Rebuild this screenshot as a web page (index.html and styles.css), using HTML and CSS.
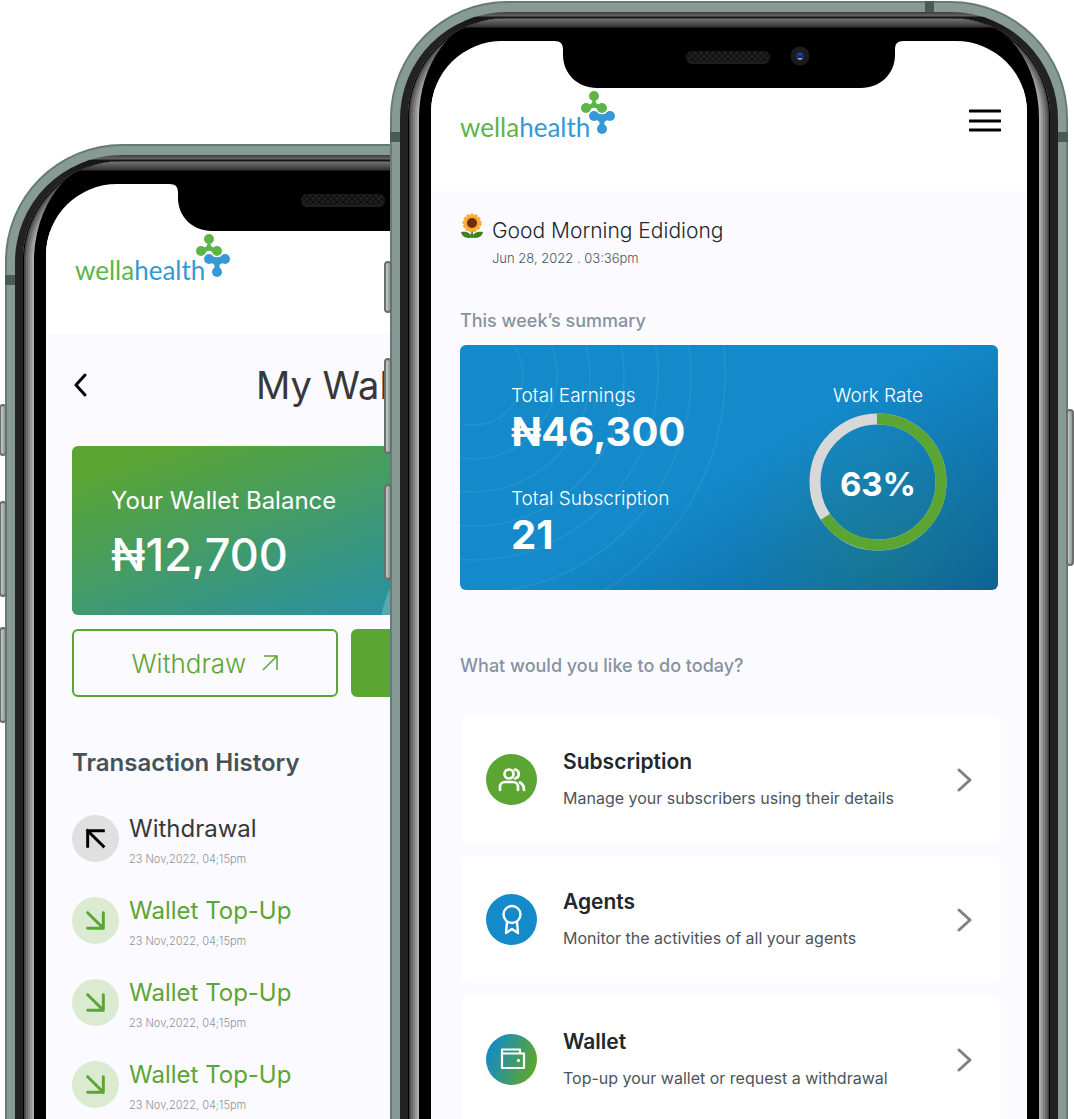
FILE: index.html
```html
<!DOCTYPE html>
<html lang="en">
<head>
<meta charset="utf-8">
<meta name="viewport" content="width=device-width, initial-scale=1">
<title>WellaHealth agent app</title>
<link rel="stylesheet" href="styles.css">
</head>
<body>
<svg class="defs" aria-hidden="true">
  <defs>
    <symbol id="mark" viewBox="0 0 36 44">
      <g fill="#5db548">
        <circle cx="14" cy="5" r="5"/><circle cx="6" cy="17" r="5"/><circle cx="22" cy="17" r="5"/>
        <path d="M12 8c1 3 0 5-4 6l2 5c2-3 6-3 8 0l2-5c-4-1-5-3-4-6z"/>
      </g>
      <g fill="#3698d4">
        <circle cx="14" cy="25" r="5"/><circle cx="30" cy="25" r="5"/><circle cx="22" cy="38" r="5"/>
        <path d="M16 21c2 3 10 3 12 0l0 8c-4 1-4 3-3 6h-6c1-3 1-5-3-6z"/>
      </g>
    </symbol>
    <symbol id="notch" viewBox="0 0 350 48">
      <path d="M0 0H350V0C343 0 341 3 341 9V14C341 33 326 47 307 47H43C24 47 9 33 9 14V9C9 3 7 0 0 0Z" fill="#000"/>
      <pattern id="mesh" width="6" height="6" patternUnits="userSpaceOnUse"><path d="M0 0l6 6M6 0L0 6" stroke="#0c0c0c"/></pattern>
      <rect x="132" y="10" width="84" height="13" rx="6" fill="#1f1f1f"/>
      <rect x="132" y="10" width="84" height="11" rx="5" fill="url(#mesh)"/>
      <circle cx="246" cy="15" r="9.500" fill="#1c1c1e"/>
      <circle cx="246" cy="15" r="4" fill="#1c2a7a"/>
      <path d="M243 17h6l-2 2h-2z" fill="#6f9fb8"/><circle cx="246" cy="14" r="1.500" fill="#5560a8"/><circle cx="246" cy="15" r="1" fill="#0a0a20"/>
    </symbol>
    <symbol id="top-up" viewBox="0 0 48 48">
      <path d="M16 16L32 32M32 16V32H16" fill="none" stroke="#5ba532" stroke-width="3" stroke-linecap="round" stroke-linejoin="round"/>
    </symbol>
    <symbol id="chevron" viewBox="0 0 16 24">
      <path d="M2 2l11 10L2 22" fill="none" stroke="#808080" stroke-width="3" stroke-linecap="round" stroke-linejoin="round"/>
    </symbol>
  </defs>
</svg>

<main class="stage">
  <section class="phone phone-back" aria-label="Wallet screen">
    <i class="key key-mute"></i><i class="key key-up"></i><i class="key key-down"></i>
    <div class="band"><i class="seam seam-left"></i>
    <div class="rim"><div class="chrome"><div class="glass"><div class="screen">
      <svg class="notch" aria-hidden="true"><use href="#notch"/></svg>
      <header class="bar">
        <div class="logo"><span class="word"><span class="wella">wella</span>health</span><svg class="mark" aria-hidden="true"><use href="#mark"/></svg></div>
      </header>
      <div class="wallet">
        <div class="title-row">
          <button class="back" type="button" aria-label="Back"><svg width="16" height="24" viewBox="0 0 16 24"><path d="M13 2L4 12L13 22" fill="none" stroke="#000" stroke-width="3" stroke-linecap="round" stroke-linejoin="round"/></svg></button>
          <h1 class="title">My Wallet</h1>
        </div>
        <div class="balance">
          <p class="balance-label">Your Wallet Balance</p>
          <p class="balance-sum">₦12,700</p>
        </div>
        <div class="actions">
          <button class="btn btn-line" type="button">Withdraw <svg width="16" height="16" viewBox="0 0 16 16"><path d="M1 15L15 1M2 1H15V15" fill="none" stroke="#5ba532" stroke-width="1.5"/></svg></button>
          <button class="btn btn-fill" type="button" aria-label="Top up"></button>
        </div>
        <h2 class="history-title">Transaction History</h2>
        <ul class="history">
          <li class="entry entry-out"><svg class="disc" viewBox="0 0 48 48" aria-hidden="true"><path d="M32 32L16 16M16 32V16H32" fill="none" stroke="#000" stroke-width="3" stroke-linecap="square"/></svg><div><p class="entry-name">Withdrawal</p><p class="entry-time">23 Nov,2022, 04;15pm</p></div></li>
          <li class="entry"><svg class="disc" aria-hidden="true"><use href="#top-up"/></svg><div><p class="entry-name">Wallet Top-Up</p><p class="entry-time">23 Nov,2022, 04;15pm</p></div></li>
          <li class="entry"><svg class="disc" aria-hidden="true"><use href="#top-up"/></svg><div><p class="entry-name">Wallet Top-Up</p><p class="entry-time">23 Nov,2022, 04;15pm</p></div></li>
          <li class="entry"><svg class="disc" aria-hidden="true"><use href="#top-up"/></svg><div><p class="entry-name">Wallet Top-Up</p><p class="entry-time">23 Nov,2022, 04;15pm</p></div></li>
        </ul>
      </div>
    </div></div></div></div></div>
  </section>

  <section class="phone phone-front" aria-label="Home screen">
    <i class="key key-mute"></i><i class="key key-up"></i><i class="key key-down"></i><i class="key key-power"></i>
    <div class="band"><i class="seam seam-left"></i><i class="seam seam-right"></i><i class="seam seam-top"></i>
    <div class="rim"><div class="chrome"><div class="glass"><div class="screen">
      <svg class="notch" aria-hidden="true"><use href="#notch"/></svg>
      <header class="bar">
        <div class="logo"><span class="word"><span class="wella">wella</span>health</span><svg class="mark" aria-hidden="true"><use href="#mark"/></svg></div>
        <button class="menu" type="button" aria-label="Menu"><svg width="32" height="24" viewBox="0 0 32 24"><path d="M1 2H31M1 12H31M1 21H31" stroke="#000" stroke-width="3" stroke-linecap="round"/></svg></button>
      </header>
      <div class="home">
        <div class="greeting">
          <svg class="flower" viewBox="0 0 24 26" aria-hidden="true">
            <path d="M12 16V25" stroke="#4b8b2b" stroke-width="2"/>
            <path d="M12 24C9 26 2 25 1 19C6 18 11 20 12 24C13 20 18 18 23 19C22 25 15 26 12 24Z" fill="#3f8127"/>
            <circle cx="12" cy="10" r="8" fill="#fbab34"/>
            <circle cx="12" cy="10" r="8" fill="none" stroke="#fbab34" stroke-width="3" stroke-dasharray="3 1"/>
            <circle cx="12" cy="10" r="5" fill="#6d2c0b"/>
          </svg>
          <div><h1 class="hello">Good Morning Edidiong</h1><p class="stamp">Jun 28, 2022 . 03:36pm</p></div>
        </div>
        <h2 class="caption">This week’s summary</h2>
        <section class="summary">
          <svg class="ripples" aria-hidden="true"><g fill="none" stroke="#fff" stroke-opacity=".07" stroke-width="1.5"><circle cx="13" cy="30" r="50"/><circle cx="13" cy="30" r="84"/><circle cx="13" cy="30" r="117"/><circle cx="13" cy="30" r="151"/><circle cx="13" cy="30" r="185"/><circle cx="13" cy="30" r="218"/><circle cx="13" cy="30" r="252"/></g></svg>
          <dl class="figures">
            <dt>Total Earnings</dt><dd>₦46,300</dd>
            <dt>Total Subscription</dt><dd>21</dd>
          </dl>
          <div class="rate">
            <p class="rate-label">Work Rate</p>
            <div class="ring">
              <svg viewBox="0 0 138 138" aria-hidden="true"><g fill="none" stroke-width="11"><circle cx="69" cy="69" r="63" stroke="#d8d8d8"/><circle cx="69" cy="69" r="63" stroke="#5ba532" pathLength="100" stroke-dasharray="66 34" transform="rotate(-91 69 69)"/></g></svg>
              <strong class="percent">63%</strong>
            </div>
          </div>
        </section>
        <h2 class="caption caption-todo">What would you like to do today?</h2>
        <nav class="links">
          <a class="link" href="#subscription">
            <svg class="badge badge-green" viewBox="0 0 51 51" aria-hidden="true"><g fill="none" stroke="#fff" stroke-width="2.7" stroke-linecap="round" stroke-linejoin="round"><circle cx="23" cy="20" r="4.500"/><path d="M14 36v-3c0-3 2-5 5-5h8c3 0 5 2 5 5v3M29 15.500c5 1 5 8 0 9M34 28.500c2 1 4 3 4 7.500"/></g></svg>
            <span class="link-text"><span class="link-name">Subscription</span><span class="link-note">Manage your subscribers using their details</span></span>
            <svg class="chevron" aria-hidden="true"><use href="#chevron"/></svg>
          </a>
          <a class="link" href="#agents">
            <svg class="badge badge-blue" viewBox="0 0 51 51" aria-hidden="true"><g fill="none" stroke="#fff" stroke-width="2.4" stroke-linejoin="round"><circle cx="26" cy="20.500" r="8.500"/><path d="M21 28l-1 11l6-4l6 4l-1-11"/></g></svg>
            <span class="link-text"><span class="link-name">Agents</span><span class="link-note">Monitor the activities of all your agents</span></span>
            <svg class="chevron" aria-hidden="true"><use href="#chevron"/></svg>
          </a>
          <a class="link" href="#wallet">
            <svg class="badge badge-mix" viewBox="0 0 51 51" aria-hidden="true"><path d="M34 19.500V15.500H16V34H38V19.500H16" fill="none" stroke="#fff" stroke-width="2.2" stroke-linejoin="round"/><rect x="31" y="25" width="3" height="3" rx="1" fill="#fff"/></svg>
            <span class="link-text"><span class="link-name">Wallet</span><span class="link-note">Top-up your wallet or request a withdrawal</span></span>
            <svg class="chevron" aria-hidden="true"><use href="#chevron"/></svg>
          </a>
        </nav>
      </div>
    </div></div></div></div></div>
  </section>
</main>
</body>
</html>
```
FILE: styles.css
```css
* { box-sizing: border-box; }
body, h1, h2, p, ul, dl, dd { margin: 0; padding: 0; }
body { background: #fff; font-family: Inter, "Liberation Sans", sans-serif; color: #20272e; }
button { font: inherit; background: none; border: 0; padding: 0; cursor: pointer; }
svg { display: block; }
.defs { position: absolute; width: 0; height: 0; }

/* Two overlapping phones that run off the bottom of the window */
.stage {
  display: grid;
  grid-template-columns: minmax(0, 390fr) minmax(0, 684fr);
  align-items: start;
  height: 100vh;
  overflow: hidden;
}
.phone { position: relative; isolation: isolate; padding: 2px 2px 0; border-radius: 117px 117px 0 0; background: #667b75; }
.phone-back { grid-area: 1 / 1 / 2 / 3; margin: 144px calc(36% + 4px) 0 5px; }
.phone-front { grid-area: 1 / 2 / 2 / 3; margin: 1px 6px 0 0; z-index: 1; }

/* Casing, from the metal band inwards */
.band { position: relative; padding: 9px 8px 0; border-radius: 115px 115px 0 0; background: #879b94; }
.rim {
  padding: 6px 8px 0;
  border-radius: 107px 107px 0 0;
  background: linear-gradient(#3c3c3c, #666 4px, #161616 5px, #161616 6px, #222 24px);
}
.chrome {
  border-radius: 99px 99px 0 0;
  background: #adadad;
  box-shadow: inset 0 0 0 1px #000, inset 0 0 0 2px #444, inset 0 0 0 3px #555, inset 0 0 0 5px #6a6a6a, inset 0 0 0 7px #808080, inset 0 0 0 9px #989898;
  padding: 0 11px;
  overflow: hidden;
}
.glass {
  padding: 23px 12px 0;
  border-radius: 76px 76px 0 0 / 100px 100px 0 0;
  background: linear-gradient(#222, #707070 1px, #333 9px, #000 10px);
}
.screen { border-radius: 71px 71px 0 0; background: linear-gradient(#fff 150px, #fbfaff 150px); overflow: hidden; min-height: 1200px; }
.notch { width: 350px; height: 48px; margin: 0 auto -1px; }

.key { position: absolute; left: -6px; width: 8px; height: 96px; border: 2px solid #6b6e6d; border-radius: 4px; background: linear-gradient(to right, #c3cdc9, #879b94); z-index: -1; }
.key-mute { top: 260px; height: 52px; }
.key-up { top: 357px; }
.key-down { top: 483px; }
.key-power { top: 408px; left: auto; right: -6px; height: 157px; }
.seam { position: absolute; background: #4b5a55; }
.seam-left { left: -2px; top: 129px; width: 10px; height: 10px; }
.seam-right { right: -2px; top: 129px; width: 10px; height: 10px; }
.seam-top { top: -2px; right: 132px; width: 9px; height: 11px; }

/* App bar */
.bar { display: flex; justify-content: space-between; align-items: flex-start; padding: 3px 26px 40px 29px; background: #fff; }
.logo { display: flex; align-items: flex-start; }
.word { font: 400 26px/36px Lato, sans-serif; color: #3698d4; margin-top: 18px; }
.wella { color: #5db548; }
.mark { width: 36px; height: 44px; margin-left: -10px; }
.menu { height: 60px; }
.phone-back .bar { padding-bottom: 46px; }

/* Home */
.home { padding: 0 29px; }
.greeting { display: flex; gap: 8px; padding-top: 22px; }
.flower { width: 24px; height: 26px; }
.hello { font-size: 21px; line-height: 36px; font-weight: 300; }
.stamp { font-size: 13px; line-height: 18px; font-weight: 300; color: #4a545c; }
.caption { margin-top: 42px; font-size: 18px; line-height: 24px; font-weight: 500; color: #87929d; }
.summary {
  position: relative;
  display: flex;
  justify-content: space-between;
  margin-top: 12px;
  padding: 39px 51px 31px;
  border-radius: 6px;
  overflow: hidden;
  color: #fff;
  background:
    radial-gradient(circle at 78% 82%, rgba(60, 150, 80, .22), rgba(60, 150, 80, 0) 140px),
    linear-gradient(150deg, #148aca 50%, #0b6196 100%);
}
.ripples { position: absolute; inset: 0; width: 100%; height: 100%; }
.figures dt { font-size: 19px; line-height: 24px; font-weight: 300; }
.figures dd { font-size: 40px; line-height: 48px; font-weight: 700; margin-bottom: 31px; }
.figures dd:last-child { margin-bottom: 0; }
.rate { display: grid; justify-items: center; align-content: start; gap: 5px; }
.rate-label { font-size: 19px; line-height: 24px; font-weight: 300; }
.ring { display: grid; place-items: center; width: 138px; height: 138px; }
.ring > * { grid-area: 1 / 1; }
.percent { font-size: 33px; line-height: 40px; font-weight: 700; padding-top: 4px; }
.caption-todo { margin-top: 64px; }
.links { display: grid; gap: 13px; margin: 38px -3px 0 1px; }
.link { display: flex; align-items: center; gap: 26px; min-height: 127px; padding: 0 28px 0 25px; border-radius: 6px; background: #fff; color: inherit; text-decoration: none; }
.badge { width: 51px; height: 51px; border-radius: 50%; flex: none; }
.badge-green { background: #5ba532; }
.badge-blue { background: #148aca; }
.badge-mix { background: linear-gradient(110deg, #148aca 10%, #5ba532 85%); }
.link-text { display: grid; gap: 8px; flex: 1; }
.link-name { font-size: 21px; line-height: 28px; font-weight: 600; }
.link-note { font-size: 16px; line-height: 28px; color: #4a545c; }
.chevron { width: 16px; height: 24px; flex: none; }

/* Wallet */
.wallet { padding: 26px 26px 0; }
.title-row { display: grid; align-items: center; }
.title-row > * { grid-area: 1 / 1; }
.back { justify-self: start; z-index: 1; }
.title { text-align: center; font-size: 38px; line-height: 50px; font-weight: 400; color: #383838; }
.balance {
  margin-top: 36px;
  padding: 39px 39px 32px;
  border-radius: 6px;
  color: #fff;
  background:
    radial-gradient(circle at 420px 190px, #5ba9a8 0 112px, transparent 113px) no-repeat,
    linear-gradient(160deg, #5ba532 8%, #2a91a0 75%);
}
.balance-label { font-size: 24px; line-height: 32px; }
.balance-sum { font-size: 45px; line-height: 56px; font-weight: 500; margin-top: 10px; }
.actions { display: grid; grid-template-columns: 1fr 1fr; gap: 13px; margin-top: 14px; }
.btn { display: flex; align-items: center; justify-content: center; gap: 16px; height: 68px; border: 2px solid #5ba532; border-radius: 6px; font-size: 26px; }
.btn-line { color: #5ba532; font-weight: 300; }
.btn-fill { background: #5ba532; }
.history-title { margin-top: 50px; font-size: 24px; line-height: 32px; font-weight: 600; color: #46525a; }
.history { list-style: none; margin-top: 33px; display: grid; gap: 24px; }
.entry { display: flex; align-items: flex-start; gap: 10px; height: 58px; color: #5ba532; }
.entry-out { color: #383838; }
.disc { width: 47px; height: 47px; margin-top: 3px; border-radius: 50%; background: #daebd1; flex: none; }
.entry-out .disc { background: #e0e0e0; }
.entry-name { font-size: 24px; line-height: 34px; }
.entry-time { font-size: 11px; line-height: 16px; margin-top: 5px; font-weight: 300; color: #8a939c; }
```
